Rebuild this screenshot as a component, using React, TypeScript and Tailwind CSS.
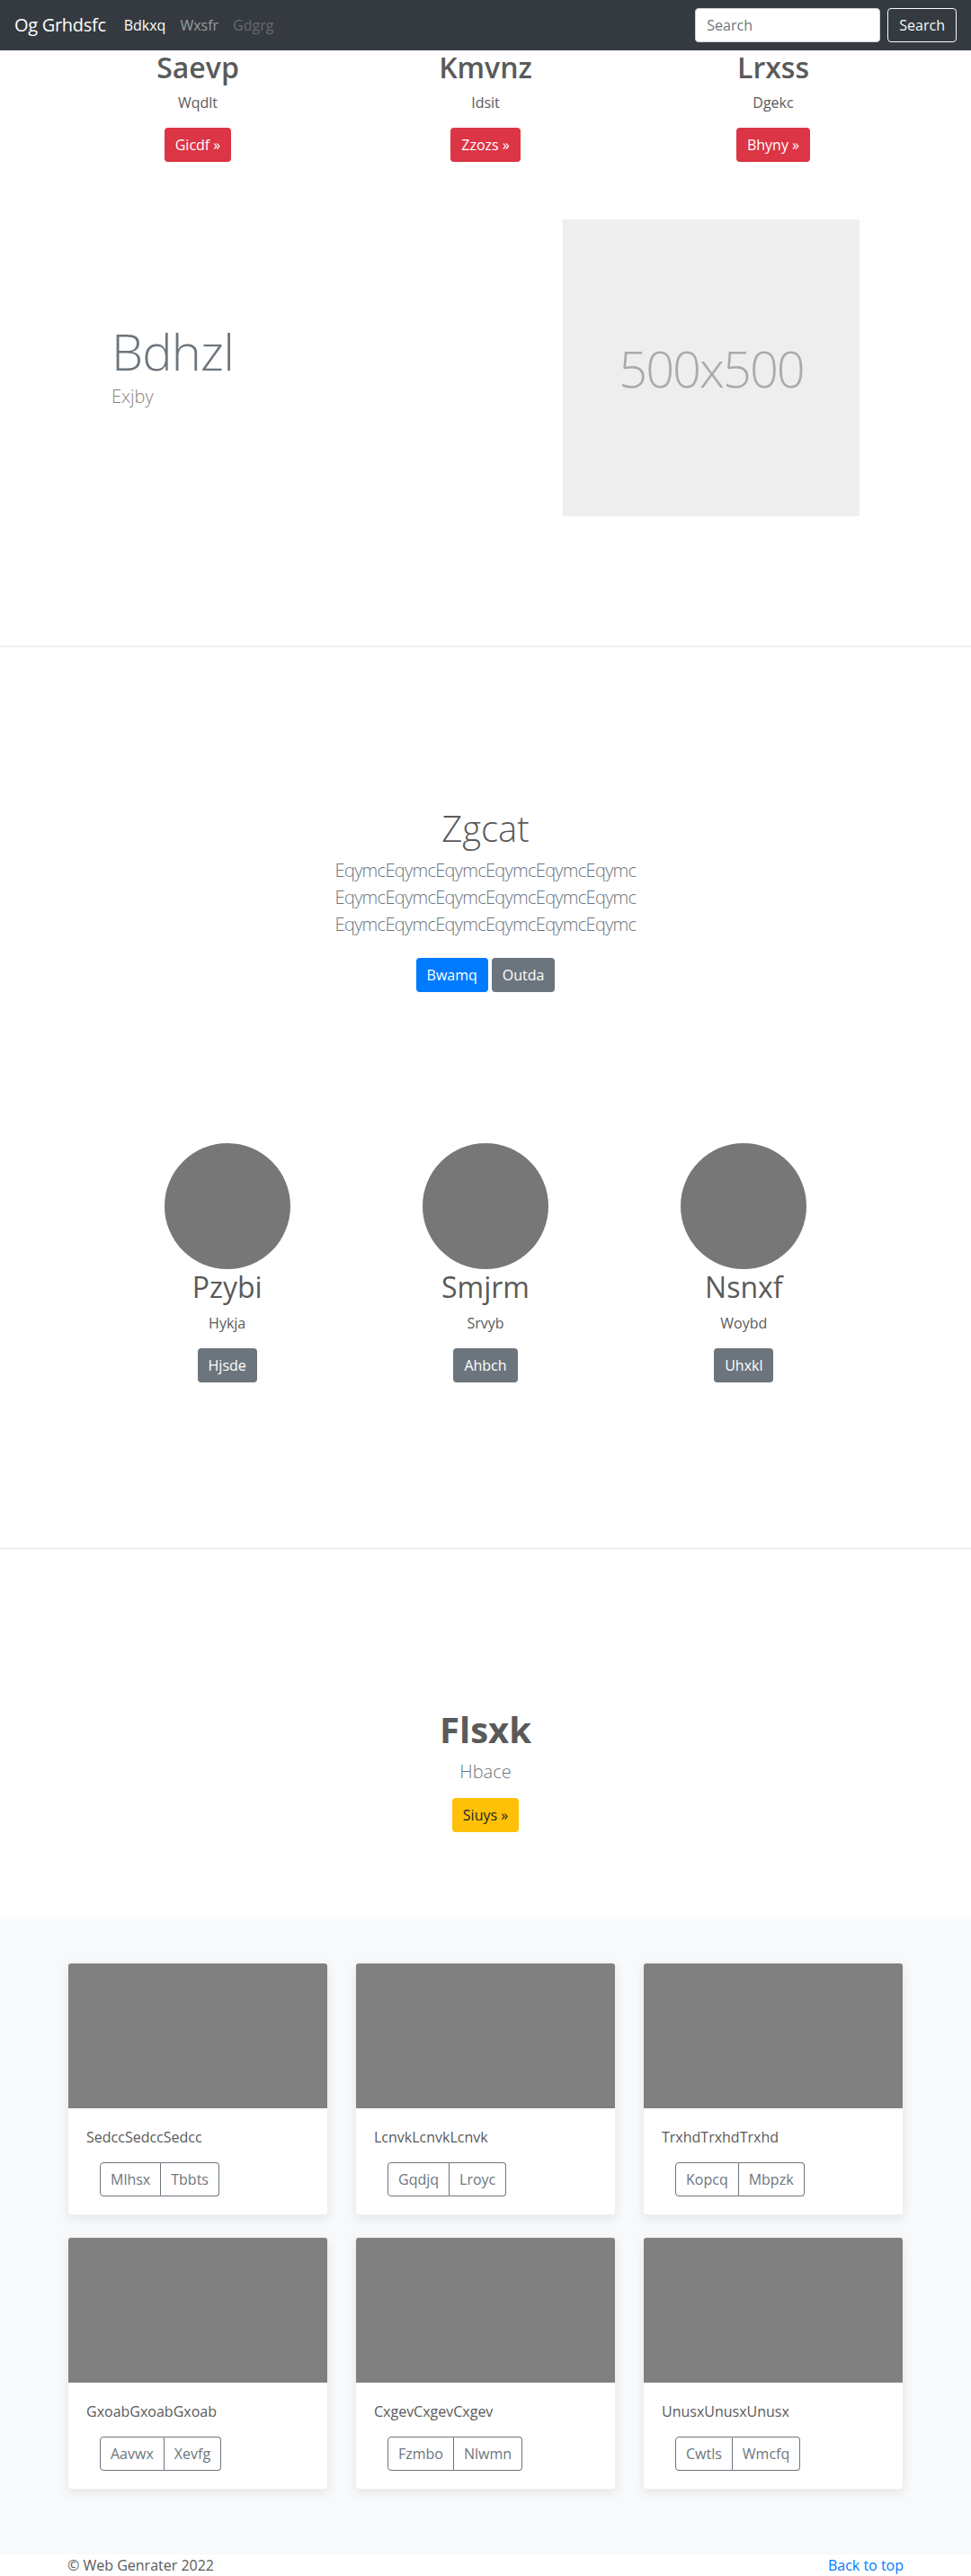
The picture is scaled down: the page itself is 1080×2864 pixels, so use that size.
import React from 'react';

const font = { fontFamily: '"Open Sans", "Noto Sans", Arial, sans-serif' };

const marketing = [
  { title: 'Saevp', text: 'Wqdlt', btn: 'Gicdf »' },
  { title: 'Kmvnz', text: 'Idsit', btn: 'Zzozs »' },
  { title: 'Lrxss', text: 'Dgekc', btn: 'Bhyny »' },
];

const people = [
  { name: 'Pzybi', text: 'Hykja', btn: 'Hjsde' },
  { name: 'Smjrm', text: 'Srvyb', btn: 'Ahbch' },
  { name: 'Nsnxf', text: 'Woybd', btn: 'Uhxkl' },
];

const cards = [
  { text: 'SedccSedccSedcc', a: 'Mlhsx', b: 'Tbbts' },
  { text: 'LcnvkLcnvkLcnvk', a: 'Gqdjq', b: 'Lroyc' },
  { text: 'TrxhdTrxhdTrxhd', a: 'Kopcq', b: 'Mbpzk' },
  { text: 'GxoabGxoabGxoab', a: 'Aavwx', b: 'Xevfg' },
  { text: 'CxgevCxgevCxgev', a: 'Fzmbo', b: 'Nlwmn' },
  { text: 'UnusxUnusxUnusx', a: 'Cwtls', b: 'Wmcfq' },
];

export default function App() {
  const lead = 'EqymcEqymcEqymcEqymcEqymcEqymc';

  return (
    <div className="bg-white text-[#5a5a5a] text-base leading-6" style={font}>
      {/* Navbar */}
      <nav className="h-14 bg-[#343a40] flex items-center justify-between px-4">
        <div className="flex items-center">
          <span className="text-white text-xl leading-[30px] mr-3 tracking-[-0.3px]">Og Grhdsfc</span>
          <a className="text-white px-2">Bdkxq</a>
          <a className="text-white/50 px-2">Wxsfr</a>
          <a className="text-white/25 px-2">Gdgrg</a>
        </div>
        <div className="flex items-center gap-2">
          <input
            className="w-[206px] h-[38px] rounded bg-white border border-[#ced4da] px-3 text-base text-[#495057] placeholder-[#6c757d] outline-none"
            placeholder="Search"
          />
          <button className="h-[38px] px-3 rounded border border-[#f8f9fa] text-[#f8f9fa]">Search</button>
        </div>
      </nav>

      {/* Marketing columns */}
      <div className="max-w-[960px] mx-auto px-[15px]">
        <div className="grid grid-cols-3 -mx-[15px]">
          {marketing.map(m => (
            <div key={m.title} className="px-[15px] text-center">
              <h2 className="text-[32px] leading-[1.2] font-semibold mb-2">{m.title}</h2>
              <p className="mb-4">{m.text}</p>
              <button className="h-[38px] px-3 rounded bg-[#dc3545] text-white">{m.btn}</button>
            </div>
          ))}
        </div>

        {/* Featurette */}
        <div className="flex items-center justify-between px-[49px] mt-16">
          <div>
            <h2 className="text-[56px] leading-none font-light tracking-[-0.05rem] text-[#6c757d]">Bdhzl</h2>
            <p className="text-xl font-light leading-[30px] mt-2 text-[#8a8079]">Exjby</p>
          </div>
          <div className="w-[330px] h-[330px] bg-[#eeeeee] flex items-center justify-center">
            <span className="text-[56px] font-light tracking-[-2px] text-[#aaaaaa]">500x500</span>
          </div>
        </div>
      </div>

      <hr className="mt-[144px] border-0 border-t border-[#e5e5e5]" />

      {/* Jumbotron */}
      <section className="text-center pt-[178px]">
        <h1 className="text-[40px] leading-[1.2] font-light mb-2">Zgcat</h1>
        <p className="text-xl font-light leading-[30px] tracking-[-0.7px] text-[#6c757d]">
          {lead}
          <br />
          {lead}
          <br />
          {lead}
        </p>
        <div className="flex justify-center gap-1 mt-[22px]">
          <button className="h-[38px] px-3 rounded bg-[#007bff] text-white">Bwamq</button>
          <button className="h-[38px] px-3 rounded bg-[#6c757d] text-white">Outda</button>
        </div>
      </section>

      {/* People */}
      <div className="max-w-[862px] mx-auto grid grid-cols-3 mt-[168px]">
        {people.map(p => (
          <div key={p.name} className="flex flex-col items-center">
            <div className="w-[140px] h-[140px] rounded-full bg-[#777777]" />
            <h2 className="text-[32px] leading-[1.2] mb-2 mt-px">{p.name}</h2>
            <p className="mb-4">{p.text}</p>
            <button className="h-[38px] px-3 rounded bg-[#6c757d] text-white">{p.btn}</button>
          </div>
        ))}
      </div>

      <hr className="mt-[184px] border-0 border-t border-[#e5e5e5]" />

      {/* Call out */}
      <section className="text-center pt-[177px] pb-[97px]">
        <h1 className="text-[40px] leading-[1.2] font-bold mb-2">Flsxk</h1>
        <p className="text-xl font-light leading-[30px] text-[#6c757d] mb-[14px]">Hbace</p>
        <button className="h-[38px] px-3 rounded bg-[#ffc107] text-[#212529]">Siuys »</button>
      </section>

      {/* Album */}
      <div className="bg-[#f8f9fa] py-12">
        <div className="max-w-[960px] mx-auto px-[15px]">
          <div className="grid grid-cols-3 gap-x-[30px]">
            {cards.map(c => (
              <div
                key={c.text}
                className="mb-6 bg-white rounded overflow-hidden border border-black/[0.06] shadow-[0_4px_12px_rgba(0,0,0,0.08)]"
              >
                <div className="h-[161px] bg-[#808080]" />
                <div className="p-5">
                  <p className="mb-4">{c.text}</p>
                  <div className="flex ml-[15px]">
                    <button className="h-[38px] px-[11px] border border-[#6c757d] text-[#6c757d] rounded-l">{c.a}</button>
                    <button className="h-[38px] px-[11px] border border-l-0 border-[#6c757d] text-[#6c757d] rounded-r">{c.b}</button>
                  </div>
                </div>
              </div>
            ))}
          </div>
        </div>
      </div>

      {/* Footer */}
      <footer className="max-w-[960px] mx-auto px-[15px] pb-8 flex justify-between">
        <p>© Web Genrater 2022</p>
        <a className="text-[#007bff]">Back to top</a>
      </footer>
    </div>
  );
}
